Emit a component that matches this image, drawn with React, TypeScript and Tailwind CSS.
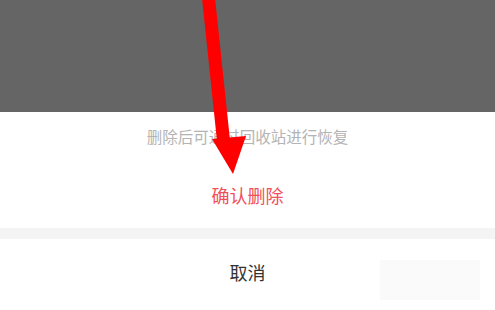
export default function App() {
  return (
    <div
      className="relative w-[495px] h-[310px] overflow-hidden bg-white"
      style={{ fontFamily: '"Noto Sans CJK SC", "Noto Sans", sans-serif' }}
    >
      <div className="h-[112px] bg-[#656565]" />

      <div className="flex flex-col items-center">
        <div className="h-[50px] flex items-center text-[15.5px] text-[#b4b4b4]">
          删除后可通过回收站进行恢复
        </div>
        <div className="h-[66px] flex items-center text-[18px] text-[#f0505a]">
          确认删除
        </div>
      </div>

      <div className="h-[11px] bg-[#f4f4f4]" />

      <div className="h-[66px] flex items-center justify-center text-[18px] text-[#333333]">
        取消
      </div>

      {/* faint smudge left over in the screenshot */}
      <div className="absolute left-[380px] top-[260px] w-[100px] h-[40px] bg-[#fafafa]" />

      {/* red annotation arrow */}
      <svg className="absolute inset-0" width="495" height="310" viewBox="0 0 495 310">
        <polygon points="202,-2 215,-2 230,140 217,141" fill="#ff0000" />
        <polygon points="212,139 246,136 233,174" fill="#ff0000" />
      </svg>
    </div>
  );
}
